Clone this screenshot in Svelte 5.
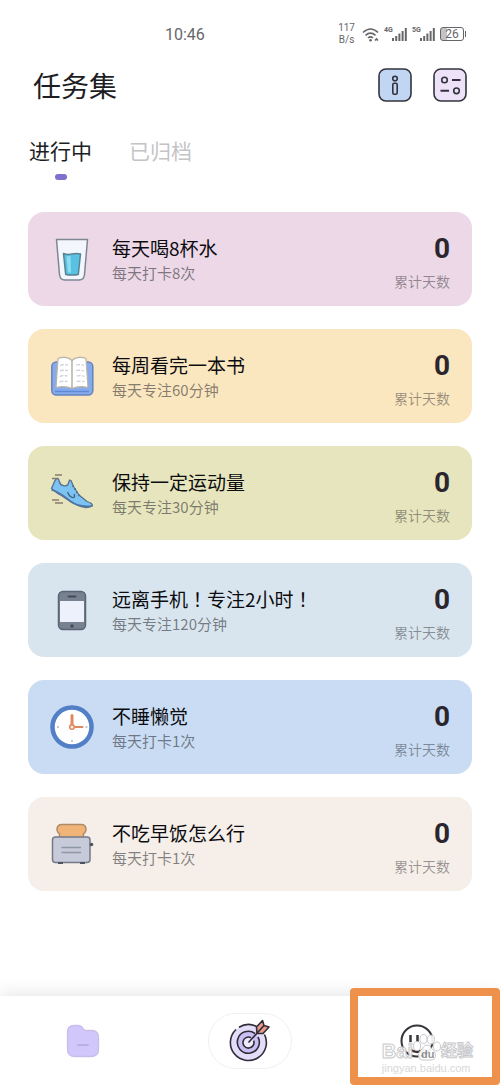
<svelte:options runes={true} />

<script lang="ts">
  type Task = {
    icon: "water" | "book" | "shoe" | "phone" | "clock" | "toaster";
    title: string;
    detail: string;
    days: number;
  };

  const tasks: Task[] = [
    { icon: "water", title: "每天喝8杯水", detail: "每天打卡8次", days: 0 },
    { icon: "book", title: "每周看完一本书", detail: "每天专注60分钟", days: 0 },
    { icon: "shoe", title: "保持一定运动量", detail: "每天专注30分钟", days: 0 },
    { icon: "phone", title: "远离手机！专注2小时！", detail: "每天专注120分钟", days: 0 },
    { icon: "clock", title: "不睡懒觉", detail: "每天打卡1次", days: 0 },
    { icon: "toaster", title: "不吃早饭怎么行", detail: "每天打卡1次", days: 0 },
  ];

  const tabs = ["进行中", "已归档"];

  let activeTab = $state(0);
  let visibleTasks = $derived(activeTab === 0 ? tasks : []);
</script>

{#snippet signal(label: string)}
  <svg class="signal" viewBox="0 0 24 18" aria-hidden="true">
    <text x="0" y="7">{label}</text>
    <path d="M9 16v-3M12.2 16v-5M15.4 16V8.5M18.6 16V6M21.8 16V3" />
  </svg>
{/snippet}

{#snippet taskIcon(name: Task["icon"])}
  <svg class="card__icon" viewBox="0 0 44 44" aria-hidden="true">
    {#if name === "water"}
      <path d="M6.500 2.500h31l-3 35q-.5 5.500-5.500 5.500H15q-5 0-5.500-5.500z" fill="#f3f6fc" stroke="#7f8795" stroke-width="1.500" stroke-linejoin="round" />
      <path d="M13.500 16.500q4 1.500 8.500.5t8.500 0l-2.200 20.500q-6.300 1-12.600 0z" fill="#58c2e3" stroke="#5b8294" stroke-width="1.500" stroke-linejoin="round" />
      <path d="M16.500 19q2 .5 4 0l.5 16.500h-3z" fill="#8fdcf1" />
    {:else if name === "book"}
      <rect x="1.800" y="8" width="41" height="33" rx="4.500" fill="#86abed" stroke="#6684bd" stroke-width="1.500" />
      <path d="M5 37.500h34" stroke="#5f88d5" stroke-width="1.500" />
      <path d="M22 6.500C18.500 3 12.500 2.500 8 4.500L6 33.500q9.500-2 16 1 6.500-3 16-1L36 4.500C31.500 2.500 25.500 3 22 6.500z" fill="#fff" stroke="#b9b2a6" stroke-width="1.200" stroke-linejoin="round" />
      <path d="M22 6.500v28" stroke="#aaa59c" stroke-width="1.300" />
      <path d="M10 11.500q3-1.500 8-.5M10 17q3-1.500 8-.5M9.500 22.500q3-1.500 8-.5M9.500 28q3-1.500 8-.5M26 11q5-1 8 .5M26 16.500q5-1 8 .5M26.500 22q5-1 8 .5M26.500 27.500q5-1 8 .5" fill="none" stroke="#c9ccd1" stroke-width="1.100" stroke-dasharray="4 1.500" />
    {:else if name === "shoe"}
      <path d="M5 9.500C7.500 6 8.500 7 9.500 11c1 4 6.500 5 8.500 2.500l1.500-4.500 1.500.5 2.500 6 5.500 8.500 8 6.500c3.500 1 6 3 5.300 4.500-5 2.500-11 1.500-16.300-1.500C18.500 30.500 14.500 25.500 8.500 23L1.500 17.500z" fill="#7bc3f2" stroke="#58708e" stroke-width="1.300" stroke-linejoin="round" />
      <path d="M1.500 19c8 1.500 15 8 19.500 11.500 6 4.500 13 5.500 21 4.500" fill="none" stroke="#5076a5" stroke-width="1.600" />
      <path d="M17.500 21q2.500 6 6 5.500 2-.5.5-3.500" fill="none" stroke="#3f6385" stroke-width="1.300" />
      <path d="m22 15.500 2-1m0 4 2-1m0 4.500 2-1m0 4 2-1" stroke="#526f8c" stroke-width="1.100" />
      <path d="M5 4h7M2 7.500h5M2 29h7M5 32h8" stroke="#8b7c69" stroke-width="1.300" />
    {:else if name === "phone"}
      <rect x="8.500" y="3.500" width="27" height="38" rx="4.500" fill="#77818f" stroke="#596575" stroke-width="1.500" />
      <rect x="10" y="13" width="24" height="21" fill="#edf1fb" />
      <path d="M18.500 8.500h7" stroke="#424c5a" stroke-width="2" stroke-linecap="round" />
      <circle cx="22" cy="38" r="1.700" fill="#414b59" />
    {:else if name === "clock"}
      <circle cx="22" cy="22" r="19.500" fill="#fff" stroke="#527fc5" stroke-width="4.500" />
      <path d="M22 10.500v11.500" stroke="#dd8a62" stroke-width="3" stroke-linecap="round" />
      <path d="M22 22h10.500" stroke="#dd8a62" stroke-width="2" stroke-linecap="round" />
      <circle cx="22" cy="22" r="2.300" fill="#fbe6d9" stroke="#dd8a62" stroke-width="1.500" />
      <path d="M22 35v2M7 22h2M35.500 22h2" stroke="#b2b7be" stroke-width="1.500" />
    {:else}
      <path d="M9.500 16v-4Q7 10.500 7 7.500q0-5 5-5h19q5 0 5 5 0 3-2.500 4.500v4z" fill="#f0b478" stroke="#ad8a68" stroke-width="1.500" />
      <rect x="2.500" y="15" width="37.500" height="25.500" rx="3" fill="#c6cad9" stroke="#747a87" stroke-width="1.500" />
      <path d="M12 25.500h18.500M12 30.500h18.500" stroke="#8f96a5" stroke-width="1.300" stroke-linecap="round" />
      <path d="M8 41h5M30 41h5" stroke="#4d535f" stroke-width="2" />
      <circle cx="41.500" cy="22.500" r="1.800" fill="#4d535f" />
    {/if}
  </svg>
{/snippet}

<div class="app">
  <div class="status">
    <span class="status__time">10:46</span>
    <div class="status__right">
      <span class="status__speed">117<br />B/s</span>
      <svg class="wifi" viewBox="0 0 18 18" aria-hidden="true">
        <path d="M1 7.500q7.500-7 15 0M3.500 10.300q5-4.500 10 0M6 13q2.500-2.200 5 0" />
        <circle cx="8.500" cy="15.300" r="1.300" />
        <path d="M13 15.500l1.500-1.500 1.500 1.500" />
      </svg>
      {@render signal("4G")}
      {@render signal("5G")}
      <span class="battery">26</span>
    </div>
  </div>

  <header class="header">
    <h1>任务集</h1>
    <div class="header__actions">
      <button type="button" class="icon-btn" aria-label="说明">
        <svg viewBox="0 0 34 34" aria-hidden="true">
          <rect x="1" y="1" width="32" height="32" rx="7" fill="#c1d6f3" />
          <circle cx="17" cy="10.500" r="2.300" />
          <rect x="14.800" y="15.300" width="4.400" height="11" rx="1.500" />
        </svg>
      </button>
      <button type="button" class="icon-btn" aria-label="设置">
        <svg viewBox="0 0 34 34" aria-hidden="true">
          <rect x="1" y="1" width="32" height="32" rx="7" fill="#eee2f9" />
          <circle cx="11.500" cy="12" r="2.800" />
          <path d="M19 12h8.500M7.500 22.800h8.500" stroke-width="2" />
          <circle cx="23.500" cy="22.800" r="2.800" />
        </svg>
      </button>
    </div>
  </header>

  <div class="tabs" role="tablist">
    {#each tabs as tab, i}
      <button
        type="button"
        role="tab"
        class="tab"
        class:tab--active={activeTab === i}
        aria-selected={activeTab === i}
        onclick={() => (activeTab = i)}
      >
        {tab}
      </button>
    {/each}
  </div>

  <ul class="cards">
    {#each visibleTasks as task}
      <li class="card card--{task.icon}">
        {@render taskIcon(task.icon)}
        <div class="card__text">
          <!-- full-width marks use the family that centres them -->
          <h2>{#each task.title.split(/(！)/) as part}{#if part === "！"}<span class="mark">{part}</span>{:else}{part}{/if}{/each}</h2>
          <p>{task.detail}</p>
        </div>
        <div class="card__count">
          <strong>{task.days}</strong>
          <span>累计天数</span>
        </div>
      </li>
    {/each}
  </ul>

  <nav class="nav">
    <a class="nav__item" href="#tasks" aria-label="任务集">
      <svg class="folder" viewBox="0 0 34 34" aria-hidden="true">
        <path d="M1.500 8q0-6.500 6.500-6.500h4q3 0 5 3l1.500 2h7q7 0 7 7v11.500q0 7.500-7.500 7.500H9q-7.500 0-7.500-7.500z" fill="#d2c7fa" stroke="#c9bdec" stroke-width="1.300" />
        <path d="M12 21h10" stroke="#b5a5da" stroke-width="1.600" stroke-linecap="round" />
      </svg>
    </a>
    <a class="nav__item" href="#focus" aria-label="专注">
      <span class="nav__pill">
        <svg class="target" viewBox="0 0 44 44" aria-hidden="true">
          <circle cx="20.500" cy="23.500" r="18" fill="#e4ddfa" />
          <circle cx="20.500" cy="23.500" r="11" fill="#cabff2" />
          <circle cx="20.500" cy="23.500" r="5.500" fill="#eee9fc" />
          <path d="M28.500 7.400A18 18 0 0 0 11 8.200M8 10.500A18 18 0 1 0 36.500 15.500M27 14.500a11 11 0 1 0 3 3.500M23 18.700a5.500 5.500 0 1 0 2.600 2.900" fill="none" />
          <path d="m29 14.500-.5-6.500 6-6.500 1.500 5 5 1.500-6 6.500z" fill="#ed9b89" />
          <path d="M20.500 23.500 36 6.500" fill="none" />
        </svg>
      </span>
    </a>
    <a class="nav__item" href="#me" aria-label="我的">
      <svg class="face" viewBox="0 0 34 34" aria-hidden="true">
        <circle cx="17" cy="17" r="15.500" />
        <path d="M10.500 11v7M17.500 11v7M9.500 25q7.500 6 15 0" stroke-width="2.500" />
      </svg>
    </a>

    <div class="watermark">
      <div class="watermark__brand">
        <span>Bai</span>
        <svg viewBox="0 0 28 28" aria-hidden="true">
          <ellipse cx="4" cy="12" rx="3.500" ry="4.500" />
          <ellipse cx="10.500" cy="5" rx="3.500" ry="4.500" />
          <ellipse cx="18" cy="5.500" rx="3.500" ry="4.500" />
          <ellipse cx="24" cy="12.500" rx="3.500" ry="4.500" />
          <path d="M14 11c3 0 4 3 6.500 5.500 3 3 3 9.500-2.500 9.500H10c-5.500 0-5.500-6.500-2.500-9.500C10 14 11 11 14 11z" />
          <text x="8" y="24">du</text>
        </svg>
        <span>经验</span>
      </div>
      <div class="watermark__url">jingyan.baidu.com</div>
    </div>
    <div class="highlight"></div>
  </nav>
</div>

<style>
  :global(body) {
    margin: 0;
    background: #fff;
  }

  .app {
    display: flex;
    flex-direction: column;
    min-height: 100vh;
    overflow: hidden;
    color: #1d1d24;
    font-family: "Noto Sans CJK SC", sans-serif;
  }

  h1,
  h2,
  p,
  ul {
    margin: 0;
    padding: 0;
    font-weight: 400;
  }

  button {
    padding: 0;
    border: none;
    background: none;
    font: inherit;
    color: inherit;
    cursor: pointer;
  }

  /* status bar */
  .status {
    display: flex;
    align-items: center;
    justify-content: space-between;
    height: 68px;
    padding: 0 34px 0 33%;
    color: #66666a;
    font-family: Roboto, sans-serif;
  }

  .status__time {
    font-size: 16px;
  }

  .status__right {
    display: flex;
    align-items: center;
    gap: 4px;
  }

  .status__speed {
    margin-right: 3px;
    font-size: 10px;
    line-height: 12px;
    text-align: center;
  }

  .wifi {
    width: 18px;
    height: 18px;
    fill: none;
    stroke: #66666a;
    stroke-width: 1.6;
  }

  .wifi circle {
    fill: #66666a;
    stroke: none;
  }

  .signal {
    width: 24px;
    height: 18px;
  }

  .signal text {
    font-size: 7px;
    font-weight: 700;
    fill: #66666a;
  }

  .signal path {
    stroke: #66666a;
    stroke-width: 2;
  }

  .battery {
    position: relative;
    box-sizing: border-box;
    width: 24px;
    height: 14px;
    margin-right: 2px;
    border: 1px solid #66666a;
    border-radius: 3px;
    background: linear-gradient(90deg, #c4c4c6 26%, transparent 26%);
    font-size: 12px;
    line-height: 12px;
    text-align: center;
  }

  .battery::after {
    content: "";
    position: absolute;
    top: 3px;
    right: -3px;
    width: 1px;
    height: 6px;
    background: #66666a;
  }

  /* header */
  .header {
    display: flex;
    align-items: center;
    justify-content: space-between;
    height: 34px;
    padding: 0 33px;
  }

  h1 {
    font-size: 28px;
    line-height: 34px;
  }

  .header__actions {
    display: flex;
    gap: 21px;
  }

  .icon-btn {
    width: 34px;
    height: 34px;
  }

  .icon-btn svg {
    display: block;
    fill: none;
    stroke: #33333d;
    stroke-width: 1.6;
  }

  /* tabs */
  .tabs {
    display: flex;
    gap: 37px;
    padding: 34px 29px 32px;
  }

  .tab {
    display: flex;
    flex-direction: column;
    align-items: center;
    gap: 10px;
    font-size: 21px;
    line-height: 28px;
    color: #c4c4c6;
  }

  .tab::after {
    content: "";
    width: 12px;
    height: 6px;
    border-radius: 3px;
  }

  .tab--active {
    color: #1d1d24;
  }

  .tab--active::after {
    background: #8070ce;
  }

  /* task cards */
  .cards {
    display: flex;
    flex-direction: column;
    gap: 23px;
    padding: 0 28px 24px;
    list-style: none;
  }

  .card {
    display: flex;
    align-items: center;
    gap: 18px;
    box-sizing: border-box;
    min-height: 94px;
    padding: 10px 22px;
    border-radius: 16px;
  }

  .card--water {
    background: #ecd8e6;
  }

  .card--book {
    background: #fae6bf;
  }

  .card--shoe {
    background: #e6e5bd;
  }

  .card--phone {
    background: #d9e5ee;
  }

  .card--clock {
    background: #c9dcf3;
  }

  .card--toaster {
    background: #f5eee9;
  }

  .card__icon {
    flex-shrink: 0;
    width: 44px;
    height: 44px;
    fill: none;
  }

  .card__text {
    flex: 1;
    min-width: 0;
  }

  .card__text h2 {
    color: #0c0c10;
    font-size: 19px;
    line-height: 28px;
  }

  .mark {
    font-family: "Noto Sans CJK TC", sans-serif;
  }

  .card__text p {
    color: rgba(30, 30, 40, 0.55);
    font-size: 15px;
    line-height: 22px;
  }

  .card__count {
    display: flex;
    flex-direction: column;
    align-items: flex-end;
    gap: 4px;
    padding-top: 4px;
  }

  .card__count strong {
    color: #2b262d;
    font-family: Roboto, sans-serif;
    font-size: 28px;
    font-weight: 700;
    line-height: 36px;
  }

  .card__count span {
    color: rgba(30, 30, 40, 0.45);
    font-size: 14px;
    line-height: 20px;
  }

  /* bottom navigation */
  .nav {
    position: relative;
    display: grid;
    grid-template-columns: repeat(3, 1fr);
    height: 89px;
    margin-top: auto;
    background: #fff;
    box-shadow: 0 -2px 16px rgba(40, 40, 60, 0.12);
  }

  .nav__item {
    display: flex;
    align-items: center;
    justify-content: center;
  }

  .nav__pill {
    display: flex;
    align-items: center;
    justify-content: center;
    box-sizing: border-box;
    width: 84px;
    height: 56px;
    border: 1px solid #f0f0f2;
    border-radius: 28px;
  }

  .folder,
  .face {
    width: 34px;
    height: 34px;
    fill: none;
  }

  .face {
    stroke: #35353b;
    stroke-width: 2;
  }

  .target {
    width: 44px;
    height: 44px;
    stroke-linejoin: round;
  }

  .target path {
    stroke: #302d38;
    stroke-width: 1.6;
  }

  .watermark {
    position: absolute;
    right: 27px;
    bottom: 11px;
    color: #fff;
    font-family: "Liberation Sans", "Noto Sans CJK SC", sans-serif;
    opacity: 0.9;
    pointer-events: none;
  }

  .watermark__brand {
    display: flex;
    align-items: flex-end;
    font-size: 20px;
    font-weight: 700;
    line-height: 22px;
    -webkit-text-stroke: 1px #c4c4c8;
  }

  .watermark__brand span:last-child {
    font-size: 16px;
  }

  .watermark__brand svg {
    width: 28px;
    height: 28px;
    fill: #fff;
    stroke: #c4c4c8;
    stroke-width: 1;
  }

  .watermark__brand text {
    fill: #8a8a8e;
    stroke: none;
    font-size: 11px;
    -webkit-text-stroke: 0;
  }

  .watermark__url {
    color: #d4d4d6;
    font-size: 11px;
    line-height: 12px;
  }

  /* frame round the last tab */
  .highlight {
    position: absolute;
    inset: -8px 0 0 auto;
    box-sizing: border-box;
    width: 30%;
    border: 8px solid #ee924b;
    border-radius: 4px;
    pointer-events: none;
  }
</style>
